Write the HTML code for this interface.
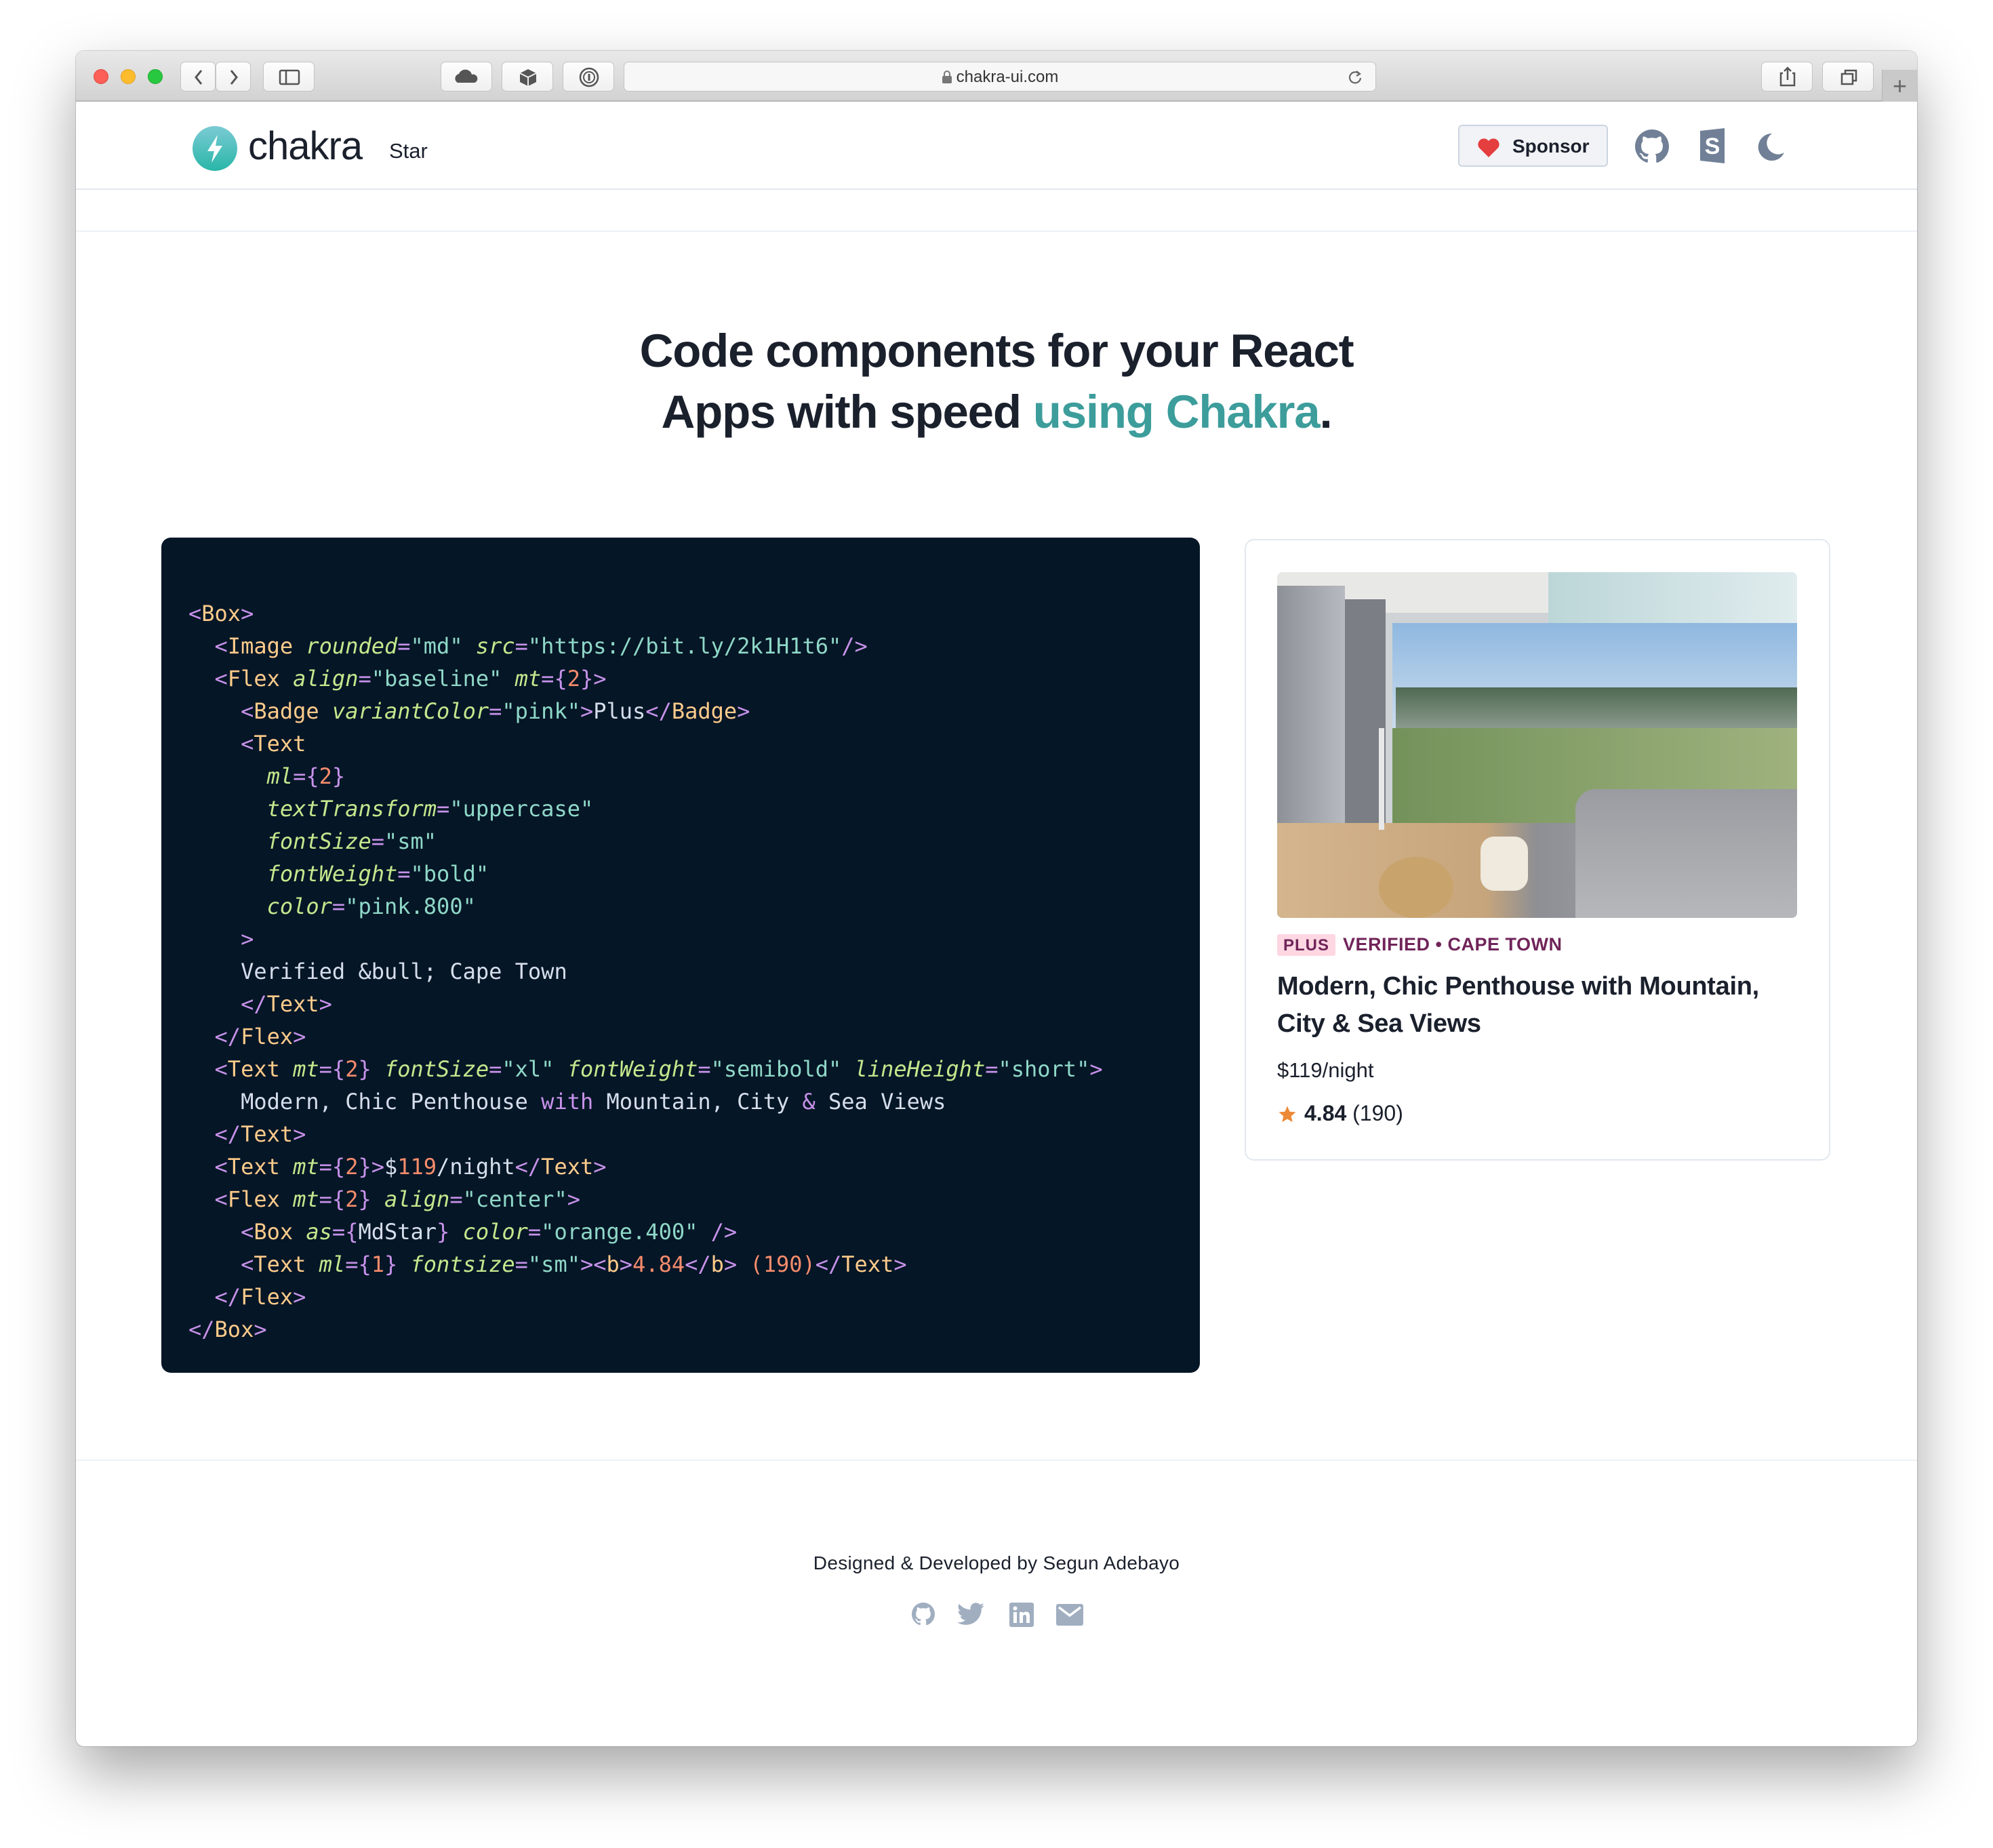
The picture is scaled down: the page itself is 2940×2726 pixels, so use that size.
<!DOCTYPE html>
<html><head><meta charset="utf-8"><style>
*{margin:0;padding:0;box-sizing:border-box}
body{width:2940px;height:2726px;background:#fff;position:relative;font-family:"Liberation Sans",sans-serif;overflow:hidden}
.abs{position:absolute}
.win{left:112px;top:75px;width:2716px;height:2501px;background:#fff;border-radius:12px;box-shadow:0 40px 90px rgba(0,0,0,.35),0 0 0 1px rgba(0,0,0,.15);overflow:hidden}
.tb{left:0;top:0;width:2716px;height:75px;background:linear-gradient(#e9e9e9,#d2d2d2);border-bottom:2px solid #b8b8b8}
.dot{width:22px;height:22px;border-radius:50%;top:27px}
.btn{top:16px;height:44px;background:linear-gradient(#fdfdfd,#f0f0f0);border:1px solid #c4c4c4;border-radius:7px}
.code{left:238px;top:793px;width:1532px;height:1232px;background:#051626;border-radius:14px;padding:88px 0 0 40px;font-family:"DejaVu Sans Mono","Liberation Mono",monospace;font-size:32px;line-height:48px;color:#d6deeb;white-space:pre}
.p{color:#c792ea}.t{color:#ffcb8b}.a{color:#c3e88d;font-style:italic}.s{color:#8fd8c8}.n{color:#f78c6c}
</style></head><body>
<div class="abs win">
 <div class="abs tb">
  <div class="abs dot" style="left:26px;background:#fc5f57;border:1px solid #de4a41"></div>
  <div class="abs dot" style="left:66px;background:#fdbc2e;border:1px solid #dea123"></div>
  <div class="abs dot" style="left:106px;background:#28c840;border:1px solid #1fa92f"></div>
  <div class="abs btn" style="left:154px;width:52px"><svg width="52" height="44"><path d="M30 12 L22 22 L30 32" stroke="#555" stroke-width="3" fill="none"/></svg></div>
  <div class="abs btn" style="left:206px;width:52px"><svg width="52" height="44"><path d="M22 12 L30 22 L22 32" stroke="#555" stroke-width="3" fill="none"/></svg></div>
  <div class="abs btn" style="left:276px;width:76px"><svg width="76" height="44"><rect x="24" y="12" width="28" height="20" rx="2" stroke="#555" stroke-width="2.5" fill="none"/><line x1="33" y1="12" x2="33" y2="32" stroke="#555" stroke-width="2.5"/></svg></div>
  <div class="abs btn" style="left:538px;width:76px"><svg width="76" height="44"><path d="M24 30 a7 7 0 0 1 2-13 a10 10 0 0 1 19 1 a6 6 0 0 1 4 12z" fill="#555"/></svg></div>
  <div class="abs btn" style="left:628px;width:76px"><svg width="76" height="44"><path d="M38 10 L50 16 L50 29 L38 35 L26 29 L26 16Z" fill="#555"/><path d="M26 16 L38 22 L50 16 M38 22 V35" stroke="#eee" stroke-width="2" fill="none"/></svg></div>
  <div class="abs btn" style="left:718px;width:76px"><svg width="76" height="44"><circle cx="38" cy="22" r="13" stroke="#555" stroke-width="2.5" fill="none"/><circle cx="38" cy="22" r="8" stroke="#555" stroke-width="2" fill="none"/><line x1="38" y1="17" x2="38" y2="27" stroke="#555" stroke-width="3"/></svg></div>
  <div class="abs btn" style="left:808px;width:1110px;background:#f7f7f7;text-align:center;font-size:24px;line-height:44px;color:#333"><svg width="16" height="20" style="vertical-align:-3px;margin-right:6px"><rect x="1" y="8" width="14" height="11" rx="2" fill="#777"/><path d="M4 8 V5 a4 4 0 0 1 8 0 V8" stroke="#777" stroke-width="2" fill="none"/></svg>chakra-ui.com<svg class="abs" style="right:18px;top:10px" width="24" height="24"><path d="M18 7 A8 8 0 1 0 20 13" stroke="#666" stroke-width="2.2" fill="none"/><path d="M14 3 L19 7 L14 10" stroke="#666" stroke-width="2.2" fill="none"/></svg></div>
  <div class="abs btn" style="left:2486px;width:76px"><svg width="76" height="44"><path d="M31 16 H28 V34 H48 V16 H45 M38 8 V26 M33 13 L38 8 L43 13" stroke="#555" stroke-width="2.5" fill="none"/></svg></div>
  <div class="abs btn" style="left:2576px;width:76px"><svg width="76" height="44"><rect x="28" y="17" width="16" height="15" stroke="#555" stroke-width="2.5" fill="none"/><path d="M33 17 V12 H49 V27 H44" stroke="#555" stroke-width="2.5" fill="none"/></svg></div>
  <div class="abs" style="left:2664px;top:28px;width:52px;height:47px;background:#c9c9c9;border-left:1px solid #b5b5b5;text-align:center;font-size:36px;line-height:47px;color:#666">+</div>
 </div>
 <!-- nav -->
 <svg class="abs" style="left:172px;top:111px" width="66" height="66"><defs><linearGradient id="g" x1="0" y1="0" x2="0" y2="1"><stop offset="0" stop-color="#7bcbd4"/><stop offset="1" stop-color="#29b6a8"/></linearGradient></defs><circle cx="33" cy="33" r="33" fill="url(#g)"/><path d="M37 13 L22 37 H32 L28 54 L44 29 H34Z" fill="#fff"/></svg>
 <div class="abs" style="left:254px;top:107px;font-size:58px;color:#1a202c;font-weight:500;letter-spacing:-1px">chakra</div>
 <div class="abs" style="left:462px;top:130px;font-size:31px;color:#1a202c">Star</div>
 <div class="abs" style="left:2039px;top:109px;width:221px;height:62px;border:2px solid #cbd5e0;border-radius:6px;background:#f1f3f6;font-weight:bold;font-size:28px;color:#1a202c;line-height:60px;padding-left:78px">Sponsor<svg class="abs" style="left:26px;top:17px" width="34" height="30"><path d="M17 29 L3 15 A8 8 0 0 1 17 5 A8 8 0 0 1 31 15Z" fill="#e53e3e"/></svg></div>
 <svg class="abs" style="left:2300px;top:116px" width="50" height="50" viewBox="0 0 16 16"><path fill="#718096" d="M8 0C3.58 0 0 3.58 0 8c0 3.540 2.29 6.53 5.47 7.59.4.07.55-.17.55-.38v-1.33c-2.23.48-2.7-1.07-2.7-1.07-.36-.92-.89-1.17-.89-1.17-.73-.5.05-.49.05-.49.8.06 1.23.83 1.23.83.72 1.23 1.87.87 2.33.66.07-.52.28-.87.5-1.07-1.78-.2-3.64-.89-3.640-3.95 0-.87.31-1.59.82-2.15-.08-.2-.36-1.02.08-2.12 0 0 .67-.21 2.2.82a7.7 7.7 0 014 0c1.53-1.04 2.2-.82 2.2-.82.44 1.1.16 1.92.08 2.12.51.56.82 1.27.82 2.15 0 3.07-1.87 3.75-3.65 3.95.29.25.54.73.54 1.48v2.2c0 .21.15.46.55.38A8.01 8.01 0 0016 8c0-4.42-3.58-8-8-8z"/></svg>
 <svg class="abs" style="left:2394px;top:114px" width="40" height="52"><path d="M2 4 L38 0 V52 L2 48Z" fill="#718096"/><text x="20" y="38" font-size="34" font-weight="bold" fill="#fff" text-anchor="middle" font-family="Liberation Sans">S</text></svg>
 <svg class="abs" style="left:2478px;top:120px" width="44" height="44"><path d="M24 2 A20 20 0 1 0 42 30 A16 16 0 0 1 24 2Z" fill="#718096"/></svg>
 <div class="abs" style="left:0;top:203px;width:2716px;height:2px;background:#e2e8f0"></div>
 <div class="abs" style="left:0;top:265px;width:2716px;height:2px;background:#edf2f7"></div>
 <!-- hero -->
 <div class="abs" style="left:0;top:398px;width:2716px;text-align:center;font-size:69px;line-height:90px;font-weight:bold;color:#1a202c;letter-spacing:-1.2px">Code components for your React<br>Apps with speed <span style="color:#3c9d9b">using Chakra</span>.</div>
</div>
<div class="abs code"><span class="p">&lt;</span><span class="t">Box</span><span class="p">&gt;</span>
  <span class="p">&lt;</span><span class="t">Image</span> <span class="a">rounded</span><span class="p">=</span><span class="s">"md"</span> <span class="a">src</span><span class="p">=</span><span class="s">"https://bit.ly/2k1H1t6"</span><span class="p">/&gt;</span>
  <span class="p">&lt;</span><span class="t">Flex</span> <span class="a">align</span><span class="p">=</span><span class="s">"baseline"</span> <span class="a">mt</span><span class="p">={</span><span class="n">2</span><span class="p">}&gt;</span>
    <span class="p">&lt;</span><span class="t">Badge</span> <span class="a">variantColor</span><span class="p">=</span><span class="s">"pink"</span><span class="p">&gt;</span>Plus<span class="p">&lt;/</span><span class="t">Badge</span><span class="p">&gt;</span>
    <span class="p">&lt;</span><span class="t">Text</span>
      <span class="a">ml</span><span class="p">={</span><span class="n">2</span><span class="p">}</span>
      <span class="a">textTransform</span><span class="p">=</span><span class="s">"uppercase"</span>
      <span class="a">fontSize</span><span class="p">=</span><span class="s">"sm"</span>
      <span class="a">fontWeight</span><span class="p">=</span><span class="s">"bold"</span>
      <span class="a">color</span><span class="p">=</span><span class="s">"pink.800"</span>
    <span class="p">&gt;</span>
    Verified &amp;bull; Cape Town
    <span class="p">&lt;/</span><span class="t">Text</span><span class="p">&gt;</span>
  <span class="p">&lt;/</span><span class="t">Flex</span><span class="p">&gt;</span>
  <span class="p">&lt;</span><span class="t">Text</span> <span class="a">mt</span><span class="p">={</span><span class="n">2</span><span class="p">}</span> <span class="a">fontSize</span><span class="p">=</span><span class="s">"xl"</span> <span class="a">fontWeight</span><span class="p">=</span><span class="s">"semibold"</span> <span class="a">lineHeight</span><span class="p">=</span><span class="s">"short"</span><span class="p">&gt;</span>
    Modern, Chic Penthouse <span class="p">with</span> Mountain, City <span class="p">&amp;</span> Sea Views
  <span class="p">&lt;/</span><span class="t">Text</span><span class="p">&gt;</span>
  <span class="p">&lt;</span><span class="t">Text</span> <span class="a">mt</span><span class="p">={</span><span class="n">2</span><span class="p">}&gt;</span>$<span class="n">119</span>/night<span class="p">&lt;/</span><span class="t">Text</span><span class="p">&gt;</span>
  <span class="p">&lt;</span><span class="t">Flex</span> <span class="a">mt</span><span class="p">={</span><span class="n">2</span><span class="p">}</span> <span class="a">align</span><span class="p">=</span><span class="s">"center"</span><span class="p">&gt;</span>
    <span class="p">&lt;</span><span class="t">Box</span> <span class="a">as</span><span class="p">={</span>MdStar<span class="p">}</span> <span class="a">color</span><span class="p">=</span><span class="s">"orange.400"</span> <span class="p">/&gt;</span>
    <span class="p">&lt;</span><span class="t">Text</span> <span class="a">ml</span><span class="p">={</span><span class="n">1</span><span class="p">}</span> <span class="a">fontsize</span><span class="p">=</span><span class="s">"sm"</span><span class="p">&gt;&lt;</span><span class="t">b</span><span class="p">&gt;</span><span class="n">4.84</span><span class="p">&lt;/</span><span class="t">b</span><span class="p">&gt;</span> <span class="n">(190)</span><span class="p">&lt;/</span><span class="t">Text</span><span class="p">&gt;</span>
  <span class="p">&lt;/</span><span class="t">Flex</span><span class="p">&gt;</span>
<span class="p">&lt;/</span><span class="t">Box</span><span class="p">&gt;</span></div>
<!-- card -->
<div class="abs" style="left:1836px;top:795px;width:864px;height:917px;border:2px solid #e2e8f0;border-radius:14px;background:#fff"></div>
<div class="abs" style="left:1884px;top:844px;width:767px;height:510px;border-radius:8px;overflow:hidden;background:#cfd3d6">
 <div class="abs" style="left:0;top:0;width:767px;height:60px;background:#e8e8e6"></div>
 <div class="abs" style="left:400px;top:0;width:367px;height:75px;background:linear-gradient(90deg,#bcd6d8,#e0ecee)"></div>
 <div class="abs" style="left:0;top:20px;width:100px;height:490px;background:linear-gradient(90deg,#8d9097,#b7bac0)"></div>
 <div class="abs" style="left:100px;top:40px;width:60px;height:330px;background:#7b7e85"></div>
 <div class="abs" style="left:170px;top:75px;width:597px;height:200px;background:linear-gradient(#8fb8e0,#dbe7f1)"></div>
 <div class="abs" style="left:175px;top:170px;width:592px;height:60px;background:linear-gradient(#4f6a52,#8a9a8c)"></div>
 <div class="abs" style="left:170px;top:230px;width:597px;height:140px;background:linear-gradient(90deg,#73925a,#9fb27e)"></div>
 <div class="abs" style="left:0;top:370px;width:767px;height:140px;background:linear-gradient(90deg,#d4b58d,#c7a57c 40%,#8d8f94 50%,#b3b6ba)"></div>
 <div class="abs" style="left:440px;top:320px;width:327px;height:190px;background:linear-gradient(#9a9ca1,#b5b7bb);border-radius:30px 0 0 0"></div>
 <div class="abs" style="left:150px;top:230px;width:8px;height:150px;background:#e8e8e8"></div>
 <div class="abs" style="left:150px;top:420px;width:110px;height:90px;background:#c9a36c;border-radius:50%"></div>
 <div class="abs" style="left:300px;top:390px;width:70px;height:80px;background:#efe9de;border-radius:20px"></div>
</div>
<div class="abs" style="left:1884px;top:1378px;height:32px;padding:0 9px;background:#fed7e2;color:#702459;font-weight:bold;font-size:24px;line-height:33px;border-radius:3px;letter-spacing:1px">PLUS</div>
<div class="abs" style="left:1981px;top:1375px;color:#702459;font-weight:bold;font-size:27px;line-height:36px;letter-spacing:.5px">VERIFIED • CAPE TOWN</div>
<div class="abs" style="left:1884px;top:1428px;width:780px;color:#1a202c;font-weight:bold;font-size:38px;line-height:55px;letter-spacing:-.3px">Modern, Chic Penthouse with Mountain, City &amp; Sea Views</div>
<div class="abs" style="left:1884px;top:1561px;color:#1a202c;font-size:31px">$119/night</div>
<svg class="abs" style="left:1884px;top:1629px" width="30" height="30" viewBox="0 0 24 24"><path fill="#ed8936" d="M12 17.27L18.18 21l-1.64-7.03L22 9.24l-7.19-.61L12 2 9.19 8.63 2 9.24l5.46 4.73L5.82 21z"/></svg>
<div class="abs" style="left:1924px;top:1624px;color:#1a202c;font-size:32px"><b>4.84</b> (190)</div>
<!-- footer -->
<div class="abs" style="left:112px;top:2153px;width:2716px;height:2px;background:#edf2f7"></div>
<div class="abs" style="left:112px;top:2290px;width:2716px;text-align:center;font-size:28px;color:#1a202c;letter-spacing:.3px">Designed &amp; Developed by Segun Adebayo</div>
<svg class="abs" style="left:1345px;top:2364px" width="34" height="34" viewBox="0 0 16 16"><path fill="#a0aec0" d="M8 0C3.58 0 0 3.58 0 8c0 3.54 2.29 6.53 5.47 7.59.4.07.55-.17.55-.38v-1.33c-2.23.48-2.7-1.07-2.7-1.07-.36-.92-.89-1.17-.89-1.17-.73-.5.05-.49.05-.49.8.06 1.23.83 1.23.83.72 1.23 1.87.87 2.33.66.07-.52.28-.87.5-1.07-1.78-.2-3.64-.89-3.64-3.95 0-.87.31-1.59.82-2.15-.08-.2-.36-1.020.08-2.12 0 0 .67-.21 2.2.82a7.7 7.7 0 014 0c1.53-1.04 2.2-.82 2.2-.82.44 1.1.16 1.92.08 2.12.51.56.82 1.27.82 2.15 0 3.07-1.87 3.75-3.65 3.95.29.25.54.73.54 1.48v2.2c0 .21.15.46.55.38A8.01 8.01 0 0016 8c0-4.42-3.58-8-8-8z"/></svg>
<svg class="abs" style="left:1412px;top:2363px" width="40" height="36" viewBox="0 0 24 20"><path fill="#a0aec0" d="M24 2.4a9.8 9.8 0 01-2.8.8A4.9 4.9 0 0023.3.4a9.9 9.9 0 01-3.1 1.2A4.9 4.9 0 0011.8 6 14 14 0 011.7.9a4.9 4.9 0 001.5 6.6 4.9 4.9 0 01-2.2-.6 4.9 4.9 0 003.9 4.9 4.9 4.9 0 01-2.2.1 4.9 4.9 0 004.6 3.4A9.9 9.9 0 010 17.3 14 14 0 007.5 19.5c9.1 0 14-7.5 14-14v-.6A10 10 0 0024 2.4z"/></svg>
<svg class="abs" style="left:1489px;top:2364px" width="36" height="36"><rect width="36" height="36" rx="3" fill="#a0aec0"/><rect x="6" y="14" width="5" height="16" fill="#fff"/><circle cx="8.5" cy="8.5" r="3" fill="#fff"/><path d="M15 14h5v2c1-2 3-2.5 5-2.5 3 0 5 2 5 6V30h-5v-9c0-2-1-3-2.5-3S20 19 20 21v9h-5z" fill="#fff"/></svg>
<svg class="abs" style="left:1558px;top:2366px" width="40" height="32"><rect width="40" height="32" rx="3" fill="#a0aec0"/><path d="M4 5 L20 17 L36 5" stroke="#fff" stroke-width="3.5" fill="none"/></svg>
</body></html>
